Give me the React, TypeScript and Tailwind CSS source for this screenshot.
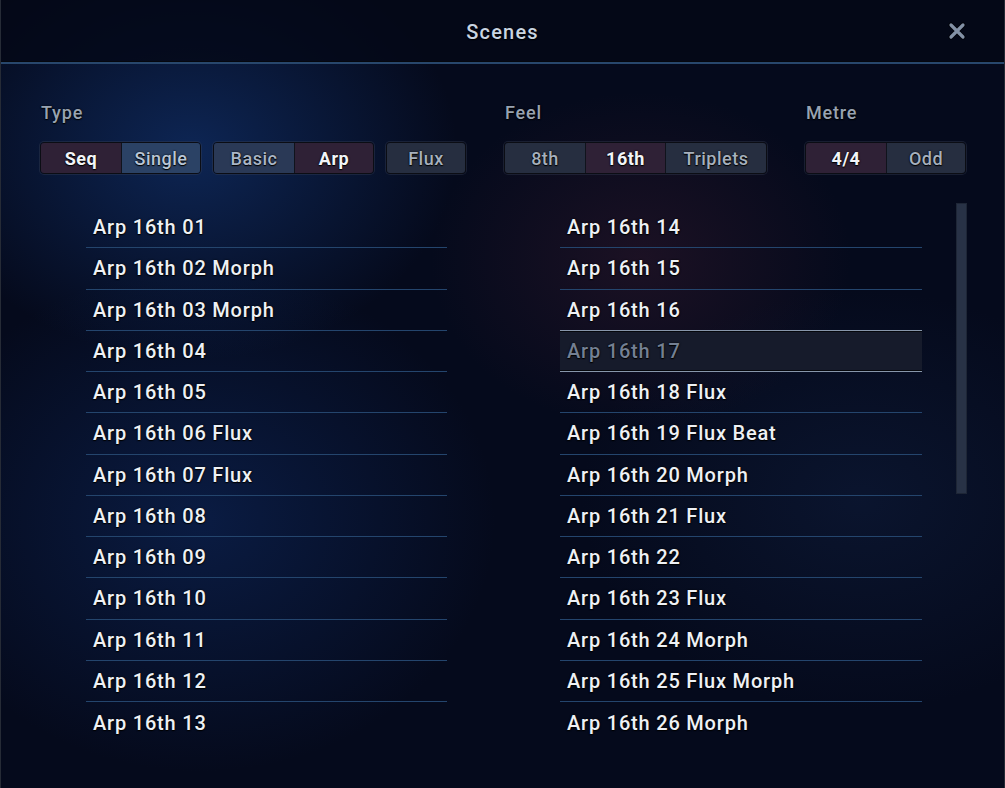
import React from "react";

const left = [
  "Arp 16th 01",
  "Arp 16th 02 Morph",
  "Arp 16th 03 Morph",
  "Arp 16th 04",
  "Arp 16th 05",
  "Arp 16th 06 Flux",
  "Arp 16th 07 Flux",
  "Arp 16th 08",
  "Arp 16th 09",
  "Arp 16th 10",
  "Arp 16th 11",
  "Arp 16th 12",
  "Arp 16th 13",
];

const right = [
  "Arp 16th 14",
  "Arp 16th 15",
  "Arp 16th 16",
  "Arp 16th 17",
  "Arp 16th 18 Flux",
  "Arp 16th 19 Flux Beat",
  "Arp 16th 20 Morph",
  "Arp 16th 21 Flux",
  "Arp 16th 22",
  "Arp 16th 23 Flux",
  "Arp 16th 24 Morph",
  "Arp 16th 25 Flux Morph",
  "Arp 16th 26 Morph",
];

type Seg = { label: string; tone: "on" | "blue" | "steel" | "dim"; w: string };

const toneClass = {
  on: "bg-[#2f2136] text-[#f2f4f8]",
  blue: "bg-[#2b4265] text-[#b9c6d6]",
  steel: "bg-[#2a3956] text-[#aab6c6]",
  dim: "bg-[#262e40] text-[#a6b0bd]",
};

function Group({ items }: { items: Seg[] }) {
  return (
    <div className="flex h-[32px] rounded-[4px] border border-[#0b0d14] overflow-hidden shadow-[0_0_0_1px_rgba(60,70,90,0.35)]">
      {items.map((s, i) => (
        <div
          key={s.label}
          className={`${s.w} ${toneClass[s.tone]} flex items-center justify-center text-[18px] tracking-[0.5px] ${
            s.tone === "on" ? "font-bold" : "font-medium"
          } ${i > 0 ? "border-l border-[#10131c]" : ""}`}
        >
          {s.label}
        </div>
      ))}
    </div>
  );
}

function Row({ name, last, sel, beforeSel }: { name: string; last: boolean; sel?: boolean; beforeSel?: boolean }) {
  const line = last ? "" : sel || beforeSel ? "border-b border-[#8796aa]" : "border-b border-[#24456d]";
  return (
    <div
      className={`h-[41.25px] flex items-center px-[7px] ${line} ${
        sel ? "bg-[#161b2b] text-[#748093] shadow-[inset_0_1px_0_#05070c,inset_0_-1px_0_#05070c]" : "text-[#eef1f5]"
      }`}
    >
      {name}
    </div>
  );
}

export default function App() {
  return (
    <div
      className="w-[1005px] h-[788px] overflow-hidden text-[#eef1f5] border-x border-[#262b36] [text-shadow:0_1px_1px_#000,0_0_2px_#000] bg-[#050a1c]"
      style={{
        fontFamily: "Roboto, 'Noto Sans', sans-serif",
        backgroundImage:
          "radial-gradient(ellipse 380px 300px at 190px 150px, rgba(20,60,130,0.55), transparent 70%), radial-gradient(ellipse 300px 240px at 640px 260px, rgba(70,30,50,0.35), transparent 70%), radial-gradient(ellipse 420px 360px at 200px 520px, rgba(15,45,105,0.5), transparent 70%), radial-gradient(ellipse 400px 300px at 860px 500px, rgba(20,40,80,0.35), transparent 70%)",
      }}
    >
      <div className="h-[62px] flex items-center justify-center relative bg-[#040817]/80 border-b border-[#05070d]">
        <span className="text-[20px] font-medium tracking-[1.2px] text-[#c9d5e2] pt-[3px]">Scenes</span>
        <svg
          className="absolute left-[947px] top-[22px]"
          width="18"
          height="18"
          viewBox="0 0 18 18"
        >
          <path d="M3 3 L15 15 M15 3 L3 15" stroke="#000" strokeWidth="5" strokeLinecap="round" opacity="0.6" />
          <path d="M3 3 L15 15 M15 3 L3 15" stroke="#8391a6" strokeWidth="3.2" strokeLinecap="round" />
        </svg>
      </div>
      <div className="h-[2px] bg-[#28476c]" />

      <div className="flex pt-[35px] pl-[39px]">
        <div className="flex flex-col">
          <div className="text-[18px] font-medium text-[#98a3b1] tracking-[0.8px] h-[24px] pl-[1px]">Type</div>
          <div className="flex gap-[12px] mt-[19px]">
            <Group
              items={[
                { label: "Seq", tone: "on", w: "w-[80px]" },
                { label: "Single", tone: "blue", w: "w-[79px]" },
              ]}
            />
            <Group
              items={[
                { label: "Basic", tone: "steel", w: "w-[80px]" },
                { label: "Arp", tone: "on", w: "w-[79px]" },
              ]}
            />
            <Group items={[{ label: "Flux", tone: "dim", w: "w-[78px]" }]} />
          </div>
        </div>
        <div className="flex flex-col ml-[38px]">
          <div className="text-[18px] font-medium text-[#98a3b1] tracking-[0.8px] h-[24px] pl-[1px]">Feel</div>
          <div className="flex mt-[19px]">
            <Group
              items={[
                { label: "8th", tone: "dim", w: "w-[80px]" },
                { label: "16th", tone: "on", w: "w-[80px]" },
                { label: "Triplets", tone: "dim", w: "w-[101px]" },
              ]}
            />
          </div>
        </div>
        <div className="flex flex-col ml-[38px]">
          <div className="text-[18px] font-medium text-[#98a3b1] tracking-[0.8px] h-[24px] pl-[1px]">Metre</div>
          <div className="flex mt-[19px]">
            <Group
              items={[
                { label: "4/4", tone: "on", w: "w-[80px]" },
                { label: "Odd", tone: "dim", w: "w-[79px]" },
              ]}
            />
          </div>
        </div>
      </div>

      <div className="flex mt-[33px] pl-[85px] text-[20px] font-medium tracking-[0.8px]">
        <div className="w-[361px] flex flex-col">
          {left.map((n, i) => (
            <Row key={n} name={n} last={i === left.length - 1} />
          ))}
        </div>
        <div className="w-[362px] ml-[113px] flex flex-col">
          {right.map((n, i) => (
            <Row key={n} name={n} last={i === right.length - 1} sel={i === 3} beforeSel={i === 2} />
          ))}
        </div>
        <div className="ml-[34px] -mt-[4px] w-[11px] h-[291px] bg-[#283246] border border-[#1e2636]" />
      </div>
    </div>
  );
}
